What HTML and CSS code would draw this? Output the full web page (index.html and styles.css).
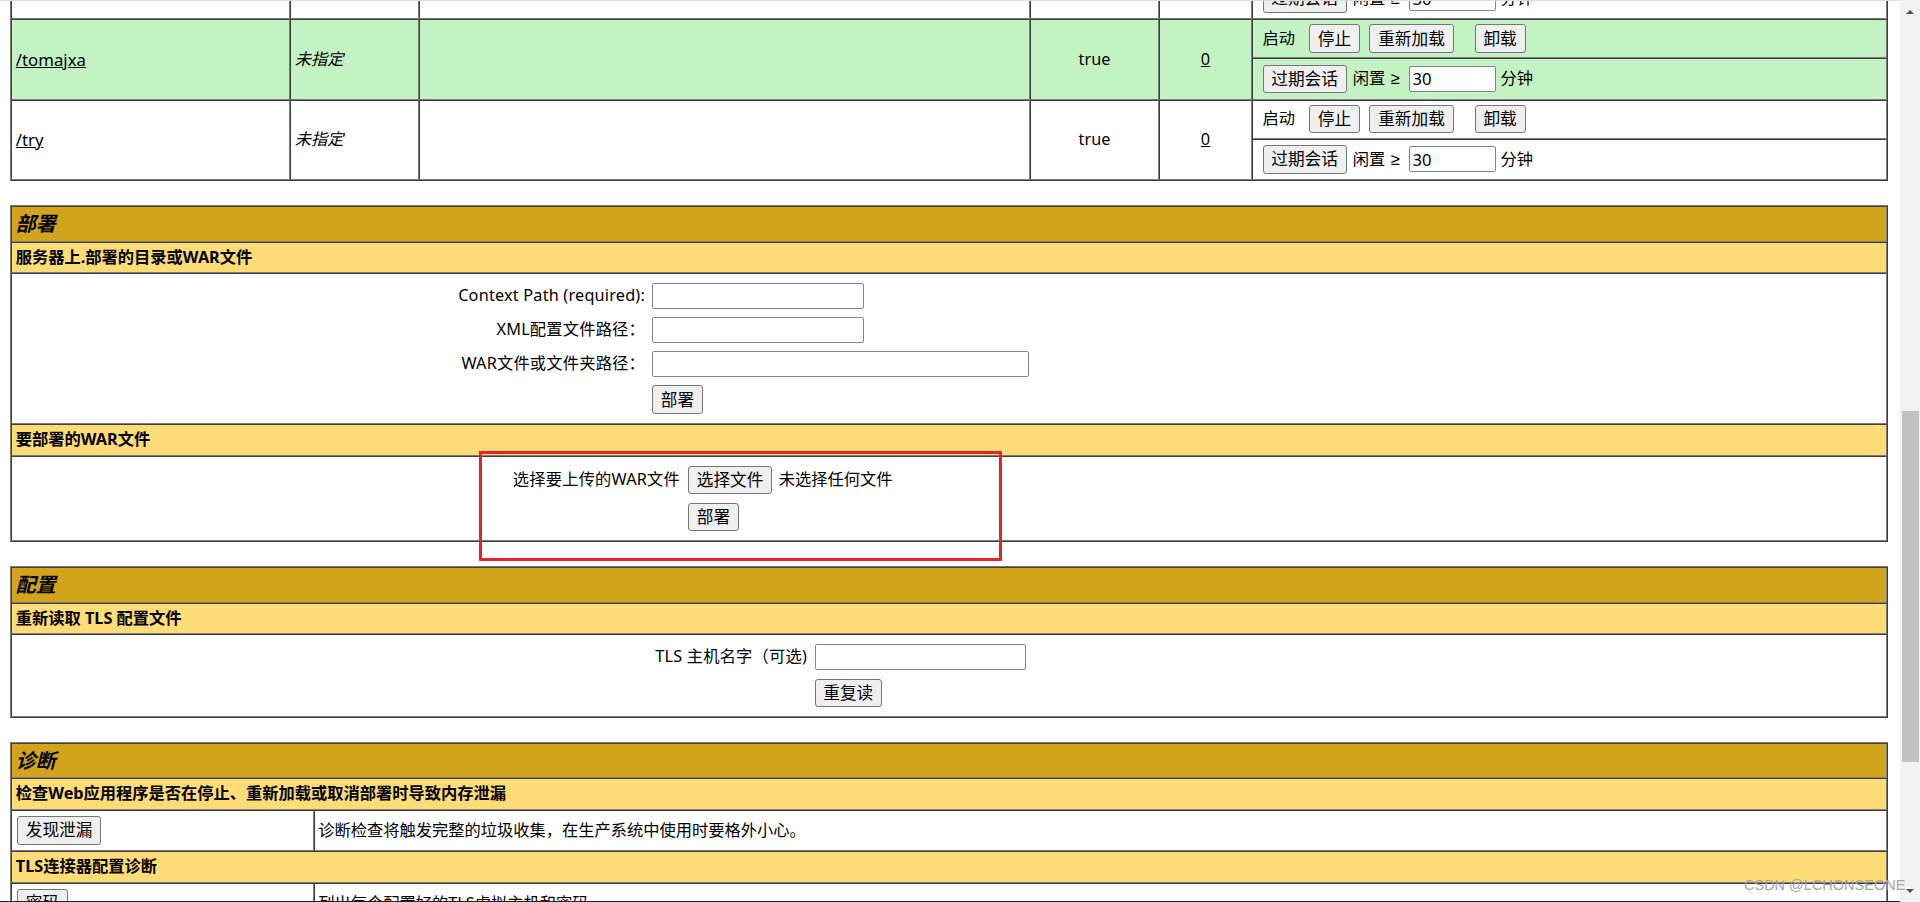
FILE: index.html
```html
<!DOCTYPE html>
<html lang="zh-CN">
<head>
<meta charset="utf-8">
<title>Tomcat Web应用程序管理者</title>
<link rel="stylesheet" href="styles.css">
</head>
<body>
<div class="screen">
  <main class="page">
    <div class="content">
      <div class="apps">
        <div class="c c-path span2"><a href="#">/manager</a></div>
        <div class="c c-ver span2"><i>未指定</i></div>
        <div class="c c-name span2">Tomcat管理应用程序</div>
        <div class="c c-run span2">true</div>
        <div class="c c-sess span2"><a href="#">1</a></div>
        <div class="c c-cmd">
          <span class="cmd-label">启动</span>
          <button class="btn">停止</button>
          <button class="btn gap-s">重新加载</button>
          <button class="btn gap-l">卸载</button>
        </div>
        <div class="c c-cmd">
          <button class="btn">过期会话</button>
          <span class="idle">闲置 <span class="ge">≥</span></span>
          <input class="txt w-idle" type="text" value="30">
          <span class="unit">分钟</span>
        </div>

        <div class="c c-path span2 hl"><a href="#">/tomajxa</a></div>
        <div class="c c-ver span2 hl"><i>未指定</i></div>
        <div class="c c-name span2 hl"></div>
        <div class="c c-run span2 hl">true</div>
        <div class="c c-sess span2 hl"><a href="#">0</a></div>
        <div class="c c-cmd hl">
          <span class="cmd-label">启动</span>
          <button class="btn">停止</button>
          <button class="btn gap-s">重新加载</button>
          <button class="btn gap-l">卸载</button>
        </div>
        <div class="c c-cmd hl">
          <button class="btn">过期会话</button>
          <span class="idle">闲置 <span class="ge">≥</span></span>
          <input class="txt w-idle" type="text" value="30">
          <span class="unit">分钟</span>
        </div>

        <div class="c c-path span2"><a href="#">/try</a></div>
        <div class="c c-ver span2"><i>未指定</i></div>
        <div class="c c-name span2"></div>
        <div class="c c-run span2">true</div>
        <div class="c c-sess span2"><a href="#">0</a></div>
        <div class="c c-cmd">
          <span class="cmd-label">启动</span>
          <button class="btn">停止</button>
          <button class="btn gap-s">重新加载</button>
          <button class="btn gap-l">卸载</button>
        </div>
        <div class="c c-cmd">
          <button class="btn">过期会话</button>
          <span class="idle">闲置 <span class="ge">≥</span></span>
          <input class="txt w-idle" type="text" value="30">
          <span class="unit">分钟</span>
        </div>
      </div>

      <section class="panel">
        <div class="cell title">部署</div>
        <div class="cell header">服务器上.部署的目录或WAR文件</div>
        <div class="cell body body-deploy">
          <form class="form-grid deploy-grid">
            <label class="lbl">Context Path (required):</label>
            <input class="txt w20" type="text">
            <label class="lbl">XML配置文件路径：</label>
            <input class="txt w20" type="text">
            <label class="lbl">WAR文件或文件夹路径：</label>
            <input class="txt w40" type="text">
            <span></span>
            <button class="btn" type="button">部署</button>
          </form>
        </div>
        <div class="cell header">要部署的WAR文件</div>
        <div class="cell body body-upload">
          <form class="form-grid upload-grid">
            <label class="lbl">选择要上传的WAR文件</label>
            <div class="file-ctl">
              <button class="btn btn-s" type="button">选择文件</button>
              <span>未选择任何文件</span>
            </div>
            <span></span>
            <button class="btn btn-s" type="button">部署</button>
          </form>
        </div>
      </section>

      <section class="panel">
        <div class="cell title">配置</div>
        <div class="cell header">重新读取 TLS 配置文件</div>
        <div class="cell body body-tls">
          <form class="form-grid tls-grid">
            <label class="lbl">TLS 主机名字（可选)</label>
            <input class="txt w-tls" type="text">
            <span></span>
            <button class="btn btn-s" type="button">重复读</button>
          </form>
        </div>
      </section>

      <section class="panel">
        <div class="cell title">诊断</div>
        <div class="cell header">检查Web应用程序是否在停止、重新加载或取消部署时导致内存泄漏</div>
        <div class="diag-row">
          <div class="cell dcell"><button class="btn" type="button">发现泄漏</button></div>
          <div class="cell dcell dtext">诊断检查将触发完整的垃圾收集，在生产系统中使用时要格外小心。</div>
        </div>
        <div class="cell header">TLS连接器配置诊断</div>
        <div class="diag-row">
          <div class="cell dcell"><button class="btn" type="button">密码</button></div>
          <div class="cell dcell dtext">列出每个配置好的TLS虚拟主机和密码。</div>
        </div>
        <div class="diag-row">
          <div class="cell dcell"><button class="btn" type="button">证书</button></div>
          <div class="cell dcell dtext">列出每个已配置的TLS虚拟主机和证书链。</div>
        </div>
      </section>
    </div>
  </main>
  <div class="scrollbar">
    <span class="arrow up"></span>
    <div class="thumb"></div>
    <span class="arrow down"></span>
  </div>
  <div class="red-box"></div>
  <div class="watermark">CSDN @LCHONSEONE</div>
</div>
</body>
</html>
```

FILE: styles.css
```css
* {
  box-sizing: border-box;
}

html,
body {
  margin: 0;
  padding: 0;
  background: #fff;
  overflow: hidden;
}

body {
  font-family: "Noto Sans", "Noto Sans CJK SC", sans-serif;
  font-size: 16.25px;
  line-height: 21.5px;
  color: #000;
}

a {
  color: #000;
  text-decoration: underline;
}

.screen {
  position: relative;
  display: flex;
  width: 1920px;
  height: 902px;
  overflow: hidden;
}

.page {
  flex: 1 1 auto;
  min-width: 0;
  overflow: hidden;
  border-top: 1px solid #dcdcdc;
  border-bottom: 1px solid #222;
  padding: 0 12px 0 10px;
}

.content {
  margin-top: -63.5px;
  display: flex;
  flex-direction: column;
  gap: 24px;
}

/* ---------- applications table ---------- */
.apps {
  display: grid;
  grid-template-columns: 279px 129px 611px 129px 93px 635px;
  grid-template-rows: 39px 41.5px 39px 41.5px 39px 41.5px;
  border: 1px solid;
  border-color: #7a7a7a #3f3f3f #3f3f3f #7a7a7a;
}

.c {
  display: flex;
  align-items: center;
  padding: 0 3.75px;
  border: 1px solid;
  border-color: #3f3f3f #7a7a7a #7a7a7a #3f3f3f;
  background: #fff;
  white-space: nowrap;
}

.c.hl {
  background: #c3f3c3;
}

.span2 {
  grid-row: span 2;
}

.c-path { grid-column: 1; font-size: 16.8px; }
.c-ver { grid-column: 2; }
.c-name { grid-column: 3; }
.c-run { grid-column: 4; justify-content: center; }
.c-sess { grid-column: 5; justify-content: center; }

.c-cmd {
  grid-column: 6;
  padding-left: 9.5px;
}

.cmd-label {
  margin-right: 14px;
}

.gap-s {
  margin-left: 9.5px;
}

.gap-l {
  margin-left: 21px;
}

.idle {
  margin-left: 6px;
}

.ge {
  font-family: "Liberation Sans", sans-serif;
  font-size: 16.5px;
  margin-left: 1px;
}

.w-idle {
  width: 87px;
  height: 25px;
  margin-left: 9px;
}

.unit {
  margin-left: 5px;
}

/* ---------- buttons & inputs ---------- */
.btn {
  flex: 0 0 auto;
  height: 28.5px;
  padding: 0 7.8px;
  border: 1px solid #767676;
  border-radius: 3px;
  background: #efefef;
  color: #000;
  font-family: "Noto Sans", "Noto Sans CJK SC", sans-serif;
  font-size: 16.67px;
  line-height: 20px;
  white-space: nowrap;
}

.btn-s {
  height: 28px;
}

.txt {
  height: 26px;
  padding: 0 3px;
  border: 1px solid #858585;
  border-radius: 2px;
  background: #fff;
  color: #000;
  font-family: "Noto Sans", "Noto Sans CJK SC", sans-serif;
  font-size: 16.67px;
}

.w20 { width: 212px; }
.w40 { width: 377px; }
.w-tls { width: 211px; }

/* ---------- panels ---------- */
.panel {
  display: flex;
  flex-direction: column;
  border: 1px solid;
  border-color: #7a7a7a #3f3f3f #3f3f3f #7a7a7a;
}

.cell {
  border: 1px solid;
  border-color: #3f3f3f #7a7a7a #7a7a7a #3f3f3f;
  padding: 4px 3.75px;
}

.title {
  background: #d2a41c;
  font-size: 20px;
  line-height: 25.5px;
  font-weight: bold;
  font-style: italic;
}

.header {
  background: #ffdc75;
  font-weight: bold;
  line-height: 21.5px;
  white-space: nowrap;
}

.body {
  padding: 9px 0;
}

.body-upload {
  padding: 9.5px 0 9px;
}

.form-grid {
  display: grid;
  align-items: center;
  justify-items: start;
  margin: 0;
}

.lbl {
  justify-self: end;
  text-align: right;
  white-space: nowrap;
  letter-spacing: 0.2px;
}

.deploy-grid {
  grid-template-columns: 633px auto;
  grid-template-rows: 26px 26px 26px 29px;
  row-gap: 8px;
  column-gap: 7px;
}

.upload-grid {
  grid-template-columns: 668px auto;
  grid-template-rows: 28px 28px;
  row-gap: 9px;
  column-gap: 8px;
}

.file-ctl {
  display: flex;
  align-items: center;
  gap: 6.5px;
  white-space: nowrap;
}

.tls-grid {
  grid-template-columns: 795px auto;
  grid-template-rows: 26px 28px;
  row-gap: 8.5px;
  column-gap: 7.5px;
}

.diag-row {
  display: grid;
  grid-template-columns: 302.5px 1fr;
}

.dcell {
  display: flex;
  align-items: center;
  padding: 5.5px 5px;
  background: #fff;
}

.dtext {
  padding-left: 3.75px;
  white-space: nowrap;
}

/* ---------- fake scrollbar ---------- */
.scrollbar {
  flex: 0 0 20px;
  display: flex;
  flex-direction: column;
  align-items: center;
  background: #f1f1f1;
}

.arrow {
  width: 0;
  height: 0;
  border-left: 4px solid transparent;
  border-right: 4px solid transparent;
}

.arrow.up {
  margin-top: 10px;
  border-bottom: 4px solid #505050;
}

.thumb {
  width: 17px;
  height: 351px;
  margin-top: 397px;
  background: #c1c1c1;
}

.arrow.down {
  margin-top: auto;
  margin-bottom: 9px;
  border-top: 4px solid #505050;
}

/* ---------- overlays ---------- */
.red-box {
  position: absolute;
  left: 479px;
  top: 451px;
  width: 523px;
  height: 110px;
  border: 3px solid #e4232b;
  pointer-events: none;
}

.watermark {
  position: absolute;
  left: 1744px;
  top: 877px;
  font-family: "Liberation Sans", sans-serif;
  font-size: 14.5px;
  line-height: 17px;
  color: #a3a3a3;
  white-space: nowrap;
  pointer-events: none;
}
```
